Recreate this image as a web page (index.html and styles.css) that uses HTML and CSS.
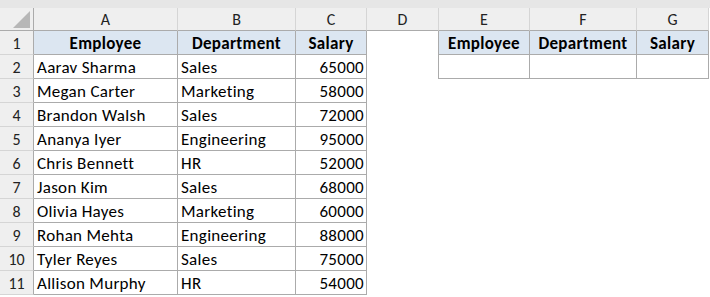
FILE: index.html
```html
<!DOCTYPE html>
<html>
<head>
<meta charset="utf-8">
<link rel="stylesheet" href="styles.css">
</head>
<body>
<div class="topstrip"></div>
<div class="sheet">
  <div class="ch corner"><svg class="tri" width="17" height="17" viewBox="0 0 17 17"><polygon points="17,0 17,17 0,17" fill="#b7b7b7"/></svg></div>
  <div class="ch">A</div><div class="ch">B</div><div class="ch">C</div><div class="ch">D</div><div class="ch">E</div><div class="ch">F</div><div class="ch last">G</div>

  <div class="rh">1</div>
  <div class="c hd">Employee</div><div class="c hd">Department</div><div class="c hd">Salary</div>
  <div class="c d1"></div>
  <div class="c hd">Employee</div><div class="c hd">Department</div><div class="c hd">Salary</div>

  <div class="rh">2</div>
  <div class="c">Aarav Sharma</div><div class="c">Sales</div><div class="c num">65000</div>
  <div class="c d1"></div>
  <div class="c"></div><div class="c"></div><div class="c"></div>

  <div class="rh">3</div>
  <div class="c">Megan Carter</div><div class="c">Marketing</div><div class="c num">58000</div>
  <div class="c e"></div><div class="c e"></div><div class="c e"></div><div class="c e"></div>

  <div class="rh">4</div>
  <div class="c">Brandon Walsh</div><div class="c">Sales</div><div class="c num">72000</div>
  <div class="c e"></div><div class="c e"></div><div class="c e"></div><div class="c e"></div>

  <div class="rh">5</div>
  <div class="c">Ananya Iyer</div><div class="c">Engineering</div><div class="c num">95000</div>
  <div class="c e"></div><div class="c e"></div><div class="c e"></div><div class="c e"></div>

  <div class="rh">6</div>
  <div class="c">Chris Bennett</div><div class="c">HR</div><div class="c num">52000</div>
  <div class="c e"></div><div class="c e"></div><div class="c e"></div><div class="c e"></div>

  <div class="rh">7</div>
  <div class="c">Jason Kim</div><div class="c">Sales</div><div class="c num">68000</div>
  <div class="c e"></div><div class="c e"></div><div class="c e"></div><div class="c e"></div>

  <div class="rh">8</div>
  <div class="c">Olivia Hayes</div><div class="c">Marketing</div><div class="c num">60000</div>
  <div class="c e"></div><div class="c e"></div><div class="c e"></div><div class="c e"></div>

  <div class="rh">9</div>
  <div class="c">Rohan Mehta</div><div class="c">Engineering</div><div class="c num">88000</div>
  <div class="c e"></div><div class="c e"></div><div class="c e"></div><div class="c e"></div>

  <div class="rh">10</div>
  <div class="c">Tyler Reyes</div><div class="c">Sales</div><div class="c num">75000</div>
  <div class="c e"></div><div class="c e"></div><div class="c e"></div><div class="c e"></div>

  <div class="rh">11</div>
  <div class="c">Allison Murphy</div><div class="c">HR</div><div class="c num">54000</div>
  <div class="c e"></div><div class="c e"></div><div class="c e"></div><div class="c e"></div>
</div>
</body>
</html>
```
FILE: styles.css
```css
html, body {
  margin: 0;
  padding: 0;
  background: #ffffff;
}
body {
  width: 710px;
  height: 297px;
  overflow: hidden;
  font-family: Carlito, Lato, "Open Sans", sans-serif;
  font-size: 17px;
  color: #000;
}
.topstrip {
  height: 8px;
  background: #e6e6e6;
}
.sheet {
  display: grid;
  grid-template-columns: 34px 144px 118px 71px 72px 91px 107px 72px;
  grid-template-rows: 23px repeat(11, 24px);
}
.sheet > div {
  box-sizing: border-box;
}
.ch {
  background: #efefef;
  border-right: 1px solid #d5d5d5;
  border-bottom: 1px solid #ababab;
  text-align: center;
  font-size: 16px;
  line-height: 23px;
  color: #222;
}
.corner {
  position: relative;
  border-right: 1px solid #ababab;
}
.tri {
  position: absolute;
  left: 13px;
  top: 3px;
}
.rh {
  background: #efefef;
  border-right: 1px solid #ababab;
  border-bottom: 1px solid #d5d5d5;
  text-align: center;
  font-size: 16px;
  padding-top: 2px;
  line-height: 22px;
  color: #222;
}
.c {
  border-right: 1px solid #ababab;
  border-bottom: 1px solid #ababab;
  padding: 2px 3px 0;
  line-height: 22px;
  letter-spacing: 0.3px;
  white-space: nowrap;
  overflow: hidden;
}
.c.hd {
  background: #dce6f1;
  font-weight: bold;
  text-align: center;
  padding: 2px 0 0;
}
.c.num {
  text-align: right;
  padding-right: 2px;
}
.c.d1 {
  border-bottom: none;
}
.c.e {
  border: none;
}
```
